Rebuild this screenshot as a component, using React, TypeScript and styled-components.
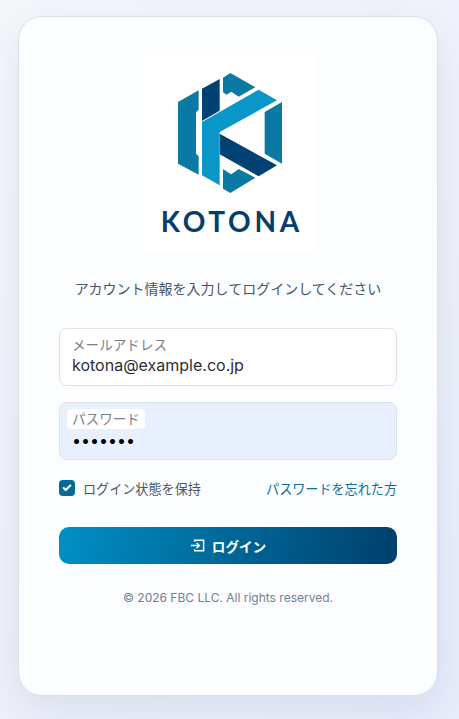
import styled, { createGlobalStyle } from "styled-components";
import { Check } from "lucide-react";

const Global = createGlobalStyle`
  html, body { margin: 0; padding: 0; height: 100%; }
  body {
    font-family: Inter, "Noto Sans CJK JP", sans-serif;
    background: linear-gradient(135deg, #f6f7fb 0%, #e8edfc 100%);
    overflow: hidden;
  }
  * { box-sizing: border-box; }
`;

const Page = styled.div`
  width: 459px;
  height: 719px;
  padding: 16px 21px 23px 18px;
`;

const Card = styled.main`
  width: 420px;
  height: 680px;
  padding: 39px 40px 0;
  background: #fcfdff;
  border: 1px solid #d9dfe8;
  border-radius: 24px;
  box-shadow: 0 12px 40px rgba(40, 60, 110, 0.1);
  display: flex;
  flex-direction: column;
`;

const LogoBox = styled.div`
  width: 170px;
  height: 196px;
  margin: 0 auto;
  transform: translateX(2px);
  background: #ffffff;
  display: flex;
  flex-direction: column;
  align-items: center;
  padding-top: 17px;
`;

const LogoMark = styled.svg`
  width: 104px;
  height: 120px;
  display: block;
`;

const LogoText = styled.div`
  margin-top: 14px;
  font-family: Lato, sans-serif;
  font-weight: 700;
  font-size: 28px;
  line-height: 29px;
  letter-spacing: 3.7px;
  margin-right: -3.7px;
  color: #033f6e;
`;

const Lead = styled.p`
  margin: 27px 0 0;
  text-align: center;
  font-size: 14px;
  line-height: 20px;
  color: #475569;
`;

const Form = styled.form`
  margin-top: 29px;
  display: flex;
  flex-direction: column;
`;

const Field = styled.label<{ $filled?: boolean }>`
  position: relative;
  display: block;
  height: 58px;
  margin-bottom: 16px;
  border: 1px solid #dde1e8;
  border-radius: 8px;
  background: ${(p) => (p.$filled ? "#e8f0fe" : "#ffffff")};
`;

const FieldLabel = styled.span<{ $chip?: boolean }>`
  position: absolute;
  left: 7px;
  top: 6px;
  padding: 0 5px;
  height: 20px;
  line-height: 20px;
  font-size: 13.6px;
  color: #7b7f86;
  border-radius: 4px;
  background: ${(p) => (p.$chip ? "#ffffff" : "transparent")};
`;

const Input = styled.input<{ $secret?: boolean }>`
  position: absolute;
  left: 12px;
  top: ${(p) => (p.$secret ? "25px" : "24px")};
  width: 300px;
  height: 24px;
  padding: 0;
  border: 0;
  outline: 0;
  background: transparent;
  font-family: Inter, sans-serif;
  font-size: 16px;
  color: ${(p) => (p.$secret ? "#000000" : "#2b2f36")};
`;

const Options = styled.div`
  display: flex;
  align-items: center;
  justify-content: space-between;
  height: 20px;
  margin-top: 2px;
`;

const Remember = styled.div`
  display: flex;
  align-items: center;
  gap: 8px;
  font-size: 13.1px;
  color: #475569;
`;

const Box = styled.span`
  width: 16px;
  height: 16px;
  border-radius: 4px;
  background: #056a96;
  color: #fff;
  display: flex;
  align-items: center;
  justify-content: center;
`;

const Forgot = styled.a`
  font-size: 13.1px;
  color: #0b6f9c;
  text-decoration: none;
`;

const Submit = styled.button`
  margin-top: 29px;
  height: 37px;
  border: 0;
  border-radius: 10px;
  background: linear-gradient(105deg, #0090c6 0%, #003f6b 100%);
  color: #fff;
  font-family: inherit;
  font-size: 13.6px;
  font-weight: 700;
  display: flex;
  align-items: center;
  justify-content: center;
  gap: 7px;
`;

const Copy = styled.p`
  margin: 26px 0 0;
  text-align: center;
  font-size: 12px;
  line-height: 16px;
  color: #718096;
`;

function Mark() {
  return (
    <LogoMark viewBox="143 68 312 360">
      <polygon fill="#0a7aa5" points="143,155 205,120 205,178 197,186 197,310 205,318 205,373 143,340" />
      <polygon fill="#0a7aa5" points="278,82 300,68 375,111 325,139 303,124 289,133 278,126" />
      <polygon fill="#0a7aa5" points="403,185 455,155 455,340 403,310" />
      <polygon fill="#0a7aa5" points="278,356 290,364 303,372 325,356 375,382 300,428 278,415" />
      <polygon fill="#004274" points="215,115 268,86 268,181 215,212" />
      <polygon fill="#004274" points="268,250 440,345 385,378 268,312" />
      <polygon fill="#0a96c8" points="215,215 385,118 440,150 268,245 268,405 215,375" />
    </LogoMark>
  );
}

export default function App() {
  return (
    <Page>
      <Global />
      <Card>
        <LogoBox>
          <Mark />
          <LogoText>KOTONA</LogoText>
        </LogoBox>
        <Lead>アカウント情報を入力してログインしてください</Lead>
        <Form>
          <Field>
            <FieldLabel>メールアドレス</FieldLabel>
            <Input type="email" defaultValue="kotona@example.co.jp" />
          </Field>
          <Field $filled>
            <FieldLabel $chip>パスワード</FieldLabel>
            <Input $secret type="password" defaultValue="1234567" />
          </Field>
          <Options>
            <Remember>
              <Box>
                <Check size={10} strokeWidth={5} />
              </Box>
              ログイン状態を保持
            </Remember>
            <Forgot href="#">パスワードを忘れた方</Forgot>
          </Options>
          <Submit type="button">
            <svg width="15" height="15" viewBox="0 0 16 16" fill="none" stroke="currentColor" strokeWidth="1.6">
              <path d="M5 4V2.5h9.5v11H5V12" />
              <path d="M1 8h8.5M7 5l3 3-3 3" />
            </svg>
            ログイン
          </Submit>
        </Form>
        <Copy>© 2026 FBC LLC. All rights reserved.</Copy>
      </Card>
    </Page>
  );
}
